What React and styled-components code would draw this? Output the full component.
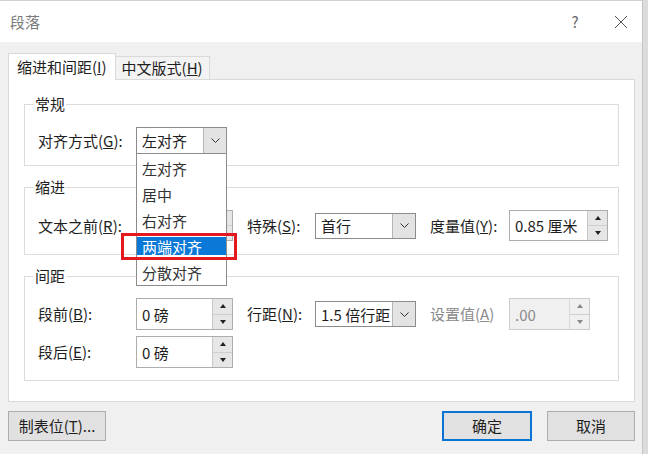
import React from 'react';
import styled, { createGlobalStyle } from 'styled-components';

const GlobalStyle = createGlobalStyle`
  html, body {
    margin: 0;
    padding: 0;
  }
  body {
    width: 648px;
    height: 454px;
    overflow: hidden;
    background: #dcdcdc;
    font-family: 'Noto Sans CJK SC', 'Noto Sans', sans-serif;
    font-size: 15px;
    color: #1e1e1e;
  }
  * {
    box-sizing: border-box;
  }
`;

const Window = styled.div`
  width: 643px;
  height: 454px;
  background: #f0f0f0;
  border-top: 1px solid #d2d2d2;
  border-right: 1px solid #c6c6c6;
  display: flex;
  flex-direction: column;
`;

const TitleBar = styled.div`
  height: 41px;
  flex-shrink: 0;
  background: #fff;
  display: flex;
  align-items: center;
  padding-left: 10px;
  color: #7a7a7a;
`;

const Title = styled.span`
  flex: 1;
  line-height: 20px;
`;

const TitleButton = styled.div`
  width: 46px;
  height: 41px;
  margin-right: ${p => (p.last ? -2 : 0)}px;
  display: flex;
  align-items: center;
  justify-content: center;
  color: #666;
  font-size: 15px;
`;

const Body = styled.div`
  padding: 0 7px 0 8px;
  display: flex;
  flex-direction: column;
`;

const Tabs = styled.div`
  display: flex;
  align-items: flex-end;
  height: 27px;
  margin-top: 10px;
`;

const Tab = styled.div`
  height: ${p => (p.active ? 27 : 24)}px;
  padding: 0 ${p => (p.active ? 8 : 6)}px;
  margin-bottom: -1px;
  display: flex;
  align-items: center;
  line-height: 20px;
  border: 1px solid #d9d9d9;
  border-bottom: ${p => (p.active ? 'none' : '1px solid #d9d9d9')};
  border-left: ${p => (p.active ? '1px solid #d9d9d9' : 'none')};
  background: ${p => (p.active ? '#fff' : '#f3f3f3')};
  position: relative;
  z-index: ${p => (p.active ? 2 : 1)};
`;

const Panel = styled.div`
  height: 323px;
  background: #fff;
  border: 1px solid #d9d9d9;
  padding: 14px 15px 0 15px;
`;

const Group = styled.fieldset`
  margin: 0 0 11px;
  padding: 0;
  border: 1px solid #dcdcdc;
  min-width: 0;
`;

const GroupTitle = styled.legend`
  margin-left: 9px;
  padding: 0 1px;
  line-height: 20px;
  font-size: 15px;
  color: #1e1e1e;
`;

const GroupBody = styled.div`
  padding: ${p => p.top}px 0 ${p => p.bottom}px 13px;
  display: flex;
  flex-direction: column;
  gap: 6px;
`;

const Row = styled.div`
  display: grid;
  grid-template-columns: 98px 111px 68px 115px 79px auto;
  align-items: center;
  height: ${p => p.h}px;
`;

const Label = styled.span`
  line-height: 20px;
  white-space: nowrap;
  color: ${p => (p.disabled ? '#8a8a8a' : '#1e1e1e')};
`;

const ComboWrap = styled.div`
  position: relative;
  width: ${p => p.w}px;
  height: ${p => p.h}px;
`;

const Combo = styled.div`
  width: 100%;
  height: 100%;
  display: flex;
  border: 1px solid #8c8c8c;
  background: #fff;
`;

const ComboText = styled.div`
  flex: 1;
  padding-left: 5px;
  display: flex;
  align-items: center;
  white-space: nowrap;
  overflow: hidden;
`;

const ComboArrow = styled.div`
  width: 23px;
  display: flex;
  align-items: center;
  justify-content: center;
  background: #e3e3e3;
  border-left: 1px solid #b4b4b4;
`;

const DropList = styled.div`
  position: absolute;
  left: 0;
  top: 100%;
  width: 100%;
  background: #fff;
  border: 1px solid #8c8c8c;
  border-top: none;
  z-index: 10;
  display: flex;
  flex-direction: column;
  padding-top: 1px;
`;

const DropItem = styled.div`
  height: ${p => (p.selected ? 18 : 26)}px;
  margin: ${p => (p.selected ? '4px 0' : '0')};
  padding-left: 5px;
  display: flex;
  align-items: center;
  color: ${p => (p.selected ? '#fff' : '#333')};
  background: ${p => (p.selected ? '#0a78d6' : 'transparent')};
  white-space: nowrap;
`;

const Highlight = styled.div`
  position: absolute;
  left: -16px;
  top: 79px;
  width: 116px;
  height: 27px;
  border: 3px solid #e3191f;
  pointer-events: none;
`;

const SpinBox = styled.div`
  width: ${p => p.w}px;
  height: ${p => p.h}px;
  display: flex;
  border: 1px solid ${p => (p.disabled ? '#cccccc' : '#adadad')};
  background: ${p => (p.disabled ? '#f0f0f0' : '#fff')};
`;

const SpinText = styled.div`
  flex: 1;
  padding-left: 5px;
  display: flex;
  align-items: center;
  white-space: nowrap;
  color: ${p => (p.disabled ? '#8a8a8a' : '#1e1e1e')};
`;

const SpinButtons = styled.div`
  width: 20px;
  display: flex;
  flex-direction: column;
  border-left: 1px solid ${p => (p.disabled ? '#dadada' : '#c8c8c8')};
  background: ${p => (p.disabled ? '#f0f0f0' : '#e6e6e6')};
`;

const SpinHalf = styled.div`
  flex: 1;
  display: flex;
  align-items: center;
  justify-content: center;
  & + & {
    border-top: 1px solid #cfcfcf;
  }
`;

const Triangle = styled.div`
  width: 0;
  height: 0;
  border-left: 3.5px solid transparent;
  border-right: 3.5px solid transparent;
  border-${p => (p.down ? 'top' : 'bottom')}: 4px solid ${p => (p.faded ? '#8a8a8a' : '#222')};
`;

const Footer = styled.div`
  display: flex;
  align-items: center;
  margin-top: 9px;
  gap: 15px;
`;

const Button = styled.button`
  height: 30px;
  width: ${p => p.w}px;
  margin-right: ${p => (p.push ? 'auto' : '0')};
  font-family: inherit;
  font-size: 15px;
  color: #1e1e1e;
  background: #e1e1e1;
  border: ${p => (p.primary ? '2px solid #0a74d4' : '1px solid #adadad')};
  padding: 0;
  line-height: 20px;
`;

const Key = ({ k }) => (
  <>
    (<u>{k}</u>)
  </>
);

const Chevron = () => (
  <svg width="9" height="5" viewBox="0 0 9 5">
    <path d="M0.5 0.5 L4.5 4.5 L8.5 0.5" fill="none" stroke="#333" strokeWidth="1" />
  </svg>
);

const CloseIcon = () => (
  <svg width="14" height="14" viewBox="0 0 14 14">
    <path d="M1 1 L13 13 M13 1 L1 13" stroke="#555" strokeWidth="1" />
  </svg>
);

const Select = ({ w, h, value, children }) => (
  <ComboWrap w={w} h={h}>
    <Combo>
      <ComboText>{value}</ComboText>
      <ComboArrow>
        <Chevron />
      </ComboArrow>
    </Combo>
    {children}
  </ComboWrap>
);

const Spin = ({ w, h, value, disabled }) => (
  <SpinBox w={w} h={h} disabled={disabled}>
    <SpinText disabled={disabled}>{value}</SpinText>
    <SpinButtons disabled={disabled}>
      <SpinHalf>
        <Triangle faded={disabled} />
      </SpinHalf>
      <SpinHalf>
        <Triangle down faded={disabled} />
      </SpinHalf>
    </SpinButtons>
  </SpinBox>
);

const alignOptions = ['左对齐', '居中', '右对齐', '两端对齐', '分散对齐'];

const App = () => {
  return (
    <Window>
      <GlobalStyle />
      <TitleBar>
        <Title>段落</Title>
        <TitleButton>?</TitleButton>
        <TitleButton last>
          <CloseIcon />
        </TitleButton>
      </TitleBar>
      <Body>
        <Tabs>
          <Tab active>
            缩进和间距<Key k="I" />
          </Tab>
          <Tab>
            中文版式<Key k="H" />
          </Tab>
        </Tabs>
        <Panel>
          <Group>
            <GroupTitle>常规</GroupTitle>
            <GroupBody top={13} bottom={11}>
              <Row h={27}>
                <Label>
                  对齐方式<Key k="G" />:
                </Label>
                <Select w={91} h={27} value="左对齐">
                  <DropList>
                    {alignOptions.map(o => (
                      <DropItem key={o} selected={o === '两端对齐'}>
                        {o}
                      </DropItem>
                    ))}
                    <Highlight />
                  </DropList>
                </Select>
              </Row>
            </GroupBody>
          </Group>

          <Group>
            <GroupTitle>缩进</GroupTitle>
            <GroupBody top={13} bottom={13}>
              <Row h={31}>
                <Label>
                  文本之前<Key k="R" />:
                </Label>
                <Spin w={97} h={31} value="" />
                <Label>
                  特殊<Key k="S" />:
                </Label>
                <Select w={101} h={26} value="首行" />
                <Label>
                  度量值<Key k="Y" />:
                </Label>
                <Spin w={99} h={31} value="0.85 厘米" />
              </Row>
            </GroupBody>
          </Group>

          <Group>
            <GroupTitle>间距</GroupTitle>
            <GroupBody top={12} bottom={12}>
              <Row h={32}>
                <Label>
                  段前<Key k="B" />:
                </Label>
                <Spin w={97} h={32} value="0 磅" />
                <Label>
                  行距<Key k="N" />:
                </Label>
                <Select w={101} h={26} value="1.5 倍行距" />
                <Label disabled>
                  设置值<Key k="A" />
                </Label>
                <Spin w={81} h={32} value=".00" disabled />
              </Row>
              <Row h={32}>
                <Label>
                  段后<Key k="E" />:
                </Label>
                <Spin w={97} h={32} value="0 磅" />
              </Row>
            </GroupBody>
          </Group>
        </Panel>
        <Footer>
          <Button w={98} push>
            制表位<Key k="T" />...
          </Button>
          <Button w={90} primary>
            确定
          </Button>
          <Button w={88}>取消</Button>
        </Footer>
      </Body>
    </Window>
  );
};

export default App;
